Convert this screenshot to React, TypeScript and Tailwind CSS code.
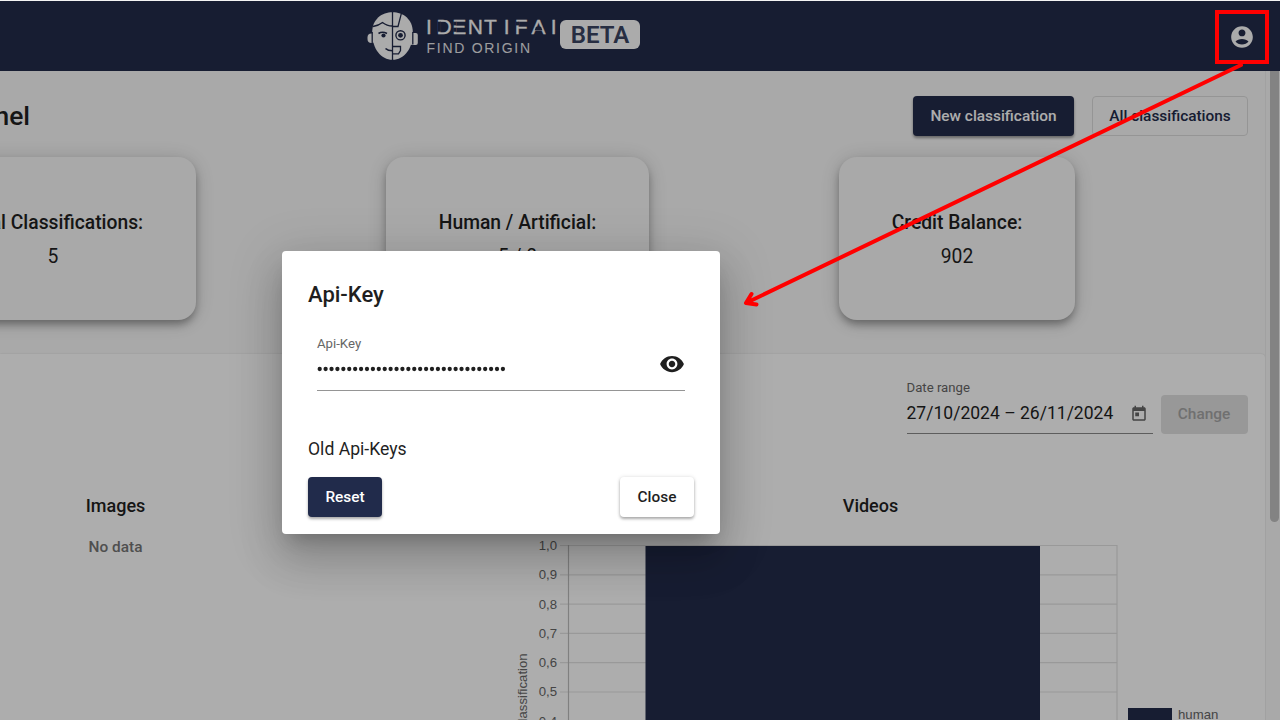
import React from "react";

const ticks = ["1,0", "0,9", "0,8", "0,7", "0,6", "0,5", "0,4"];

function FaceLogo() {
  return (
    <svg width="52" height="50" viewBox="0 0 52 50" className="shrink-0">
      <rect x="0.500" y="22.500" width="8" height="9.500" rx="4" fill="#fdfdfd" />
      <rect x="43" y="22" width="7.800" height="12" rx="2" fill="#fdfdfd" />
      <path d="M25.500 1.300C36 1.300 45.800 8 45.800 21.500C45.800 38 37 48.800 25.500 48.800C14 48.800 5.200 38 5.200 21.500C5.200 8 15 1.300 25.500 1.300Z" fill="#fdfdfd" />
      <g stroke="#232b4a" fill="none" strokeWidth="1.300">
        <path d="M25.500 0V49" />
        <path d="M6 15.500C9 15 12.500 14 15.500 11.500C18 13.500 22 15 25.500 15" />
        <path d="M34.500 1.800L31 15.500H25.500" />
        <path d="M11.500 22.500C14 20.800 17 20.800 20 22.500" strokeWidth="1.600" />
        <circle cx="33.500" cy="24.300" r="4.600" strokeWidth="1.400" />
        <path d="M18.500 37.500C20.500 39.400 23 39.800 25.500 39.800" strokeWidth="1.600" />
        <path d="M25.500 35.500H33.500V39.500L31.500 42.800H25.500" />
        <path d="M5.200 21V33.500M45.800 21V33.500" />
      </g>
      <circle cx="16.500" cy="24.500" r="2.100" fill="#232b4a" />
      <circle cx="33.500" cy="24.300" r="2.400" fill="#232b4a" />
    </svg>
  );
}

function Wordmark() {
  return (
    <svg width="134" height="46" viewBox="0 0 134 46" className="ml-[7px] shrink-0 font-['Liberation_Sans',sans-serif]">
      <text x="0.1 10.600 26.200 41.700 58 77.800 88.800 105.500 124.800" y="23" fontSize="21" fill="#fdfdfd" stroke="#fdfdfd" strokeWidth="0.300">
        IDENTIFAI
      </text>
      <g fill="#232b4a">
        <rect x="11.500" y="10.700" width="3.400" height="10" />
        <rect x="27.200" y="10.700" width="3.300" height="3.700" />
        <rect x="27.200" y="16.700" width="3.300" height="4.100" />
        <rect x="89.800" y="10.700" width="3.300" height="3.700" />
        <path d="M110 15.700H115L116.400 19.200H108.600Z" />
      </g>
      <text x="0.500" y="42.400" fontSize="14" letterSpacing="1.720" fill="#e8e8ea">
        FIND ORIGIN
      </text>
    </svg>
  );
}

function Header() {
  return (
    <header className="flex h-[71px] shrink-0 items-start border-t border-[#f4f4f4] bg-[#232b4a]">
      <div className="flex w-[1215px] pt-[10px] pl-[367px]">
        <FaceLogo />
        <Wordmark />
        <div className="mt-[9px] h-[29px] w-[80px] shrink-0 rounded-[6px] bg-[#fdfdfd] text-center text-[24px] leading-[30px] font-semibold text-[#3a4562]">
          BETA
        </div>
      </div>
      <svg width="26" height="26" viewBox="0 0 24 24" fill="#fdfdfd" className="mt-[23px] ml-[14px]">
        <path d="M12 2C6.480 2 2 6.480 2 12s4.480 10 10 10 10-4.480 10-10S17.520 2 12 2zm0 3c1.800 0 3.200 1.400 3.200 3.200s-1.400 3.200-3.200 3.200-3.200-1.400-3.200-3.200S10.200 5 12 5zM12 19c-2.500 0-4.700-1-6-2.800 1.300-1.500 3.500-2.400 6-2.400s4.700.9 6 2.400C16.700 18 14.500 19 12 19z" />
      </svg>
    </header>
  );
}

function StatCard({ title, value, width }: { title: string; value: string; width: string }) {
  return (
    <div className={`${width} h-[163px] shrink-0 rounded-[18px] bg-[#fafafa] pt-[51px] text-center text-[#1f1f1f] shadow-[0_5px_8px_-1px_rgba(0,0,0,0.35),0_2px_22px_0_rgba(0,0,0,0.16)]`}>
      <div className="text-[19.300px] leading-[30px] font-medium whitespace-nowrap">{title}</div>
      <div className="mt-[4px] text-[19.300px] leading-[30px]">{value}</div>
    </div>
  );
}

function Chart() {
  return (
    <div className="flex h-[190px]">
      <div className="flex w-[23px] justify-end">
        <span className="mt-[115px] h-[98px] shrink-0 rotate-180 text-right text-[13.200px] leading-[22px] whitespace-nowrap text-[#666] [writing-mode:vertical-rl]">
          Classification
        </span>
      </div>
      <div className="flex w-[23px] flex-col items-end text-[13.200px] text-[#666]">
        {ticks.map((t) => (
          <span key={t} className="h-[29.300px] shrink-0 leading-[15px]">{t}</span>
        ))}
      </div>
      <svg width="560" height="190" className="ml-[3px] shrink-0">
        <g stroke="#e2e2e2" strokeWidth="1.200">
          {ticks.map((t, i) => (
            <path key={t} d={`M0 ${7.5 + i * 29.3}H557`} />
          ))}
          <path d="M557 7V190" />
        </g>
        <path d="M8.500 7V190" stroke="#bdbdbd" strokeWidth="1.200" />
        <rect x="85.500" y="8" width="394.500" height="190" fill="#232b4a" />
      </svg>
      <div className="mt-[169px] ml-[8px] flex h-[15px] gap-[6px] text-[13.200px] leading-[15px] text-[#666]">
        <span className="mt-[1px] h-[14px] w-[44px] bg-[#232b4a]" />
        human
      </div>
    </div>
  );
}

function Dialog() {
  return (
    <div className="absolute top-[251px] left-[282px] flex h-[283px] w-[438px] flex-col rounded-[4px] bg-white px-[26px] text-[#1f1f1f] shadow-[0_12px_17px_-8px_rgba(0,0,0,0.2),0_26px_42px_3px_rgba(0,0,0,0.14),0_10px_50px_9px_rgba(0,0,0,0.12)]">
      <h2 className="mt-[26px] text-[22px] leading-[35px] font-medium">Api-Key</h2>
      <div className="mx-[9px] mt-[23px] flex h-[56px] border-b border-[#959595]">
        <div className="flex-1">
          <div className="text-[13.200px] leading-[18px] text-[#666]">Api-Key</div>
          <svg width="190" height="8" className="mt-[12px] block" fill="#1f1f1f">
            {Array.from({ length: 32 }, (_, i) => (
              <circle key={i} cx={2.7 + i * 5.91} cy="4" r="2.150" />
            ))}
          </svg>
        </div>
        <svg width="26" height="26" viewBox="0 0 24 24" fill="#1f1f1f" className="mt-[16px]">
          <path d="M12 4.500C7 4.500 2.730 7.610 1 12c1.730 4.390 6 7.500 11 7.500s9.270-3.110 11-7.500c-1.730-4.390-6-7.500-11-7.500zM12 17c-2.760 0-5-2.240-5-5s2.240-5 5-5 5 2.240 5 5-2.240 5-5 5zm0-8c-1.660 0-3 1.340-3 3s1.340 3 3 3 3-1.340 3-3-1.340-3-3-3z" />
        </svg>
      </div>
      <div className="mt-[45px] text-[17.600px] leading-[26px]">Old Api-Keys</div>
      <div className="mt-[15px] flex justify-between text-[15.400px] font-medium">
        <button className="h-[40px] w-[74px] rounded-[4px] bg-[#212b4b] pt-[2px] text-white shadow-[0_2px_3px_rgba(0,0,0,0.35)]">Reset</button>
        <button className="h-[40px] w-[74px] rounded-[4px] bg-white pt-[2px] shadow-[0_2px_3px_rgba(0,0,0,0.3),0_0_4px_rgba(0,0,0,0.12)]">Close</button>
      </div>
    </div>
  );
}

export default function App() {
  return (
    <div className="relative flex h-[720px] w-[1280px] flex-col overflow-hidden bg-[#fafafa] font-['Roboto',sans-serif] text-[#1f1f1f]">
      <Header />
      <div className="flex h-[649px]">
        <main className="flex w-[1266px] shrink-0 flex-col overflow-hidden border-r border-[#eeeeee]">
          <section className="h-[283px] shrink-0">
            <div className="flex items-start pt-[25px]">
              <h1 className="flex w-[30px] justify-end text-[26.400px] leading-[40px] font-medium">nel</h1>
              <button className="ml-[883px] h-[40px] w-[161px] rounded-[4px] bg-[#232b4a] pt-[2px] text-[15.400px] font-medium text-white shadow-[0_2px_3px_rgba(0,0,0,0.4)]">
                New classification
              </button>
              <button className="ml-[18px] h-[40px] w-[156px] rounded-[4px] border border-[#dcdcdc] pt-[2px] text-[15.400px] font-medium whitespace-nowrap text-[#232b4a]">
                All classifications
              </button>
            </div>
            <div className="mt-[21px] ml-[-90px] flex gap-[190px]">
              <StatCard title="Total Classifications:" value="5" width="w-[286px]" />
              <StatCard title="Human / Artificial:" value="5 / 0" width="w-[263px]" />
              <StatCard title="Credit Balance:" value="902" width="w-[236px]" />
            </div>
          </section>
          <section className="h-[366px] rounded-tr-[4px] bg-white shadow-[0_0_2px_rgba(0,0,0,0.15)]">
            <div className="flex h-[80px] items-end pl-[906.500px]">
              <div className="h-[56px] w-[246px] border-b border-[#8a8a8a]">
                <div className="text-[13.200px] leading-[20px] text-[#666]">Date range</div>
                <div className="flex items-center justify-between pr-[5px]">
                  <span className="text-[17.550px] leading-[30px] whitespace-nowrap">27/10/2024 – 26/11/2024</span>
                  <svg width="18" height="18" viewBox="0 0 24 24" fill="#666" className="mt-[2px]">
                    <path d="M19 3h-1V1h-2v2H8V1H6v2H5c-1.110 0-1.990.9-1.990 2L3 19c0 1.100.89 2 2 2h14c1.100 0 2-.9 2-2V5c0-1.100-.9-2-2-2zm0 16H5V8h14v11zM7 10h5v5H7z" />
                  </svg>
                </div>
              </div>
              <div className="ml-[8px] h-[39px] w-[87px] rounded-[4px] bg-[#e0e0e0] text-center text-[15.400px] leading-[39px] font-medium text-[#a6a6a6]">Change</div>
            </div>
            <div className="flex pt-[58px]">
              <div className="w-[231px] text-center">
                <div className="text-[18px] leading-[28px] font-medium">Images</div>
                <div className="mt-[14px] text-[15.400px] leading-[26px] font-medium text-[#757575]">No data</div>
              </div>
              <div className="ml-[280px] w-[754px] font-['Liberation_Sans',sans-serif]">
                <div className="pr-[35px] text-center font-['Roboto',sans-serif] text-[18px] leading-[28px] font-medium">Videos</div>
                <div className="mt-[18px]">
                  <Chart />
                </div>
              </div>
            </div>
          </section>
        </main>
        <div className="flex w-[14px] justify-center bg-[#fafafa] pl-[2px]">
          <div className="h-[451px] w-[9px] rounded-b-full bg-[#c1c1c1]" />
        </div>
      </div>
      <div className="absolute inset-x-0 top-px bottom-0 bg-black/32" />
      <Dialog />
      <svg width="1280" height="720" className="absolute inset-0" fill="none" stroke="#ff0000" strokeWidth="4">
        <rect x="1217" y="12" width="50" height="50" />
        <path d="M1241 65L746 303M751.500 294L746 303L756.500 304.500" strokeLinecap="round" strokeLinejoin="round" />
      </svg>
    </div>
  );
}
